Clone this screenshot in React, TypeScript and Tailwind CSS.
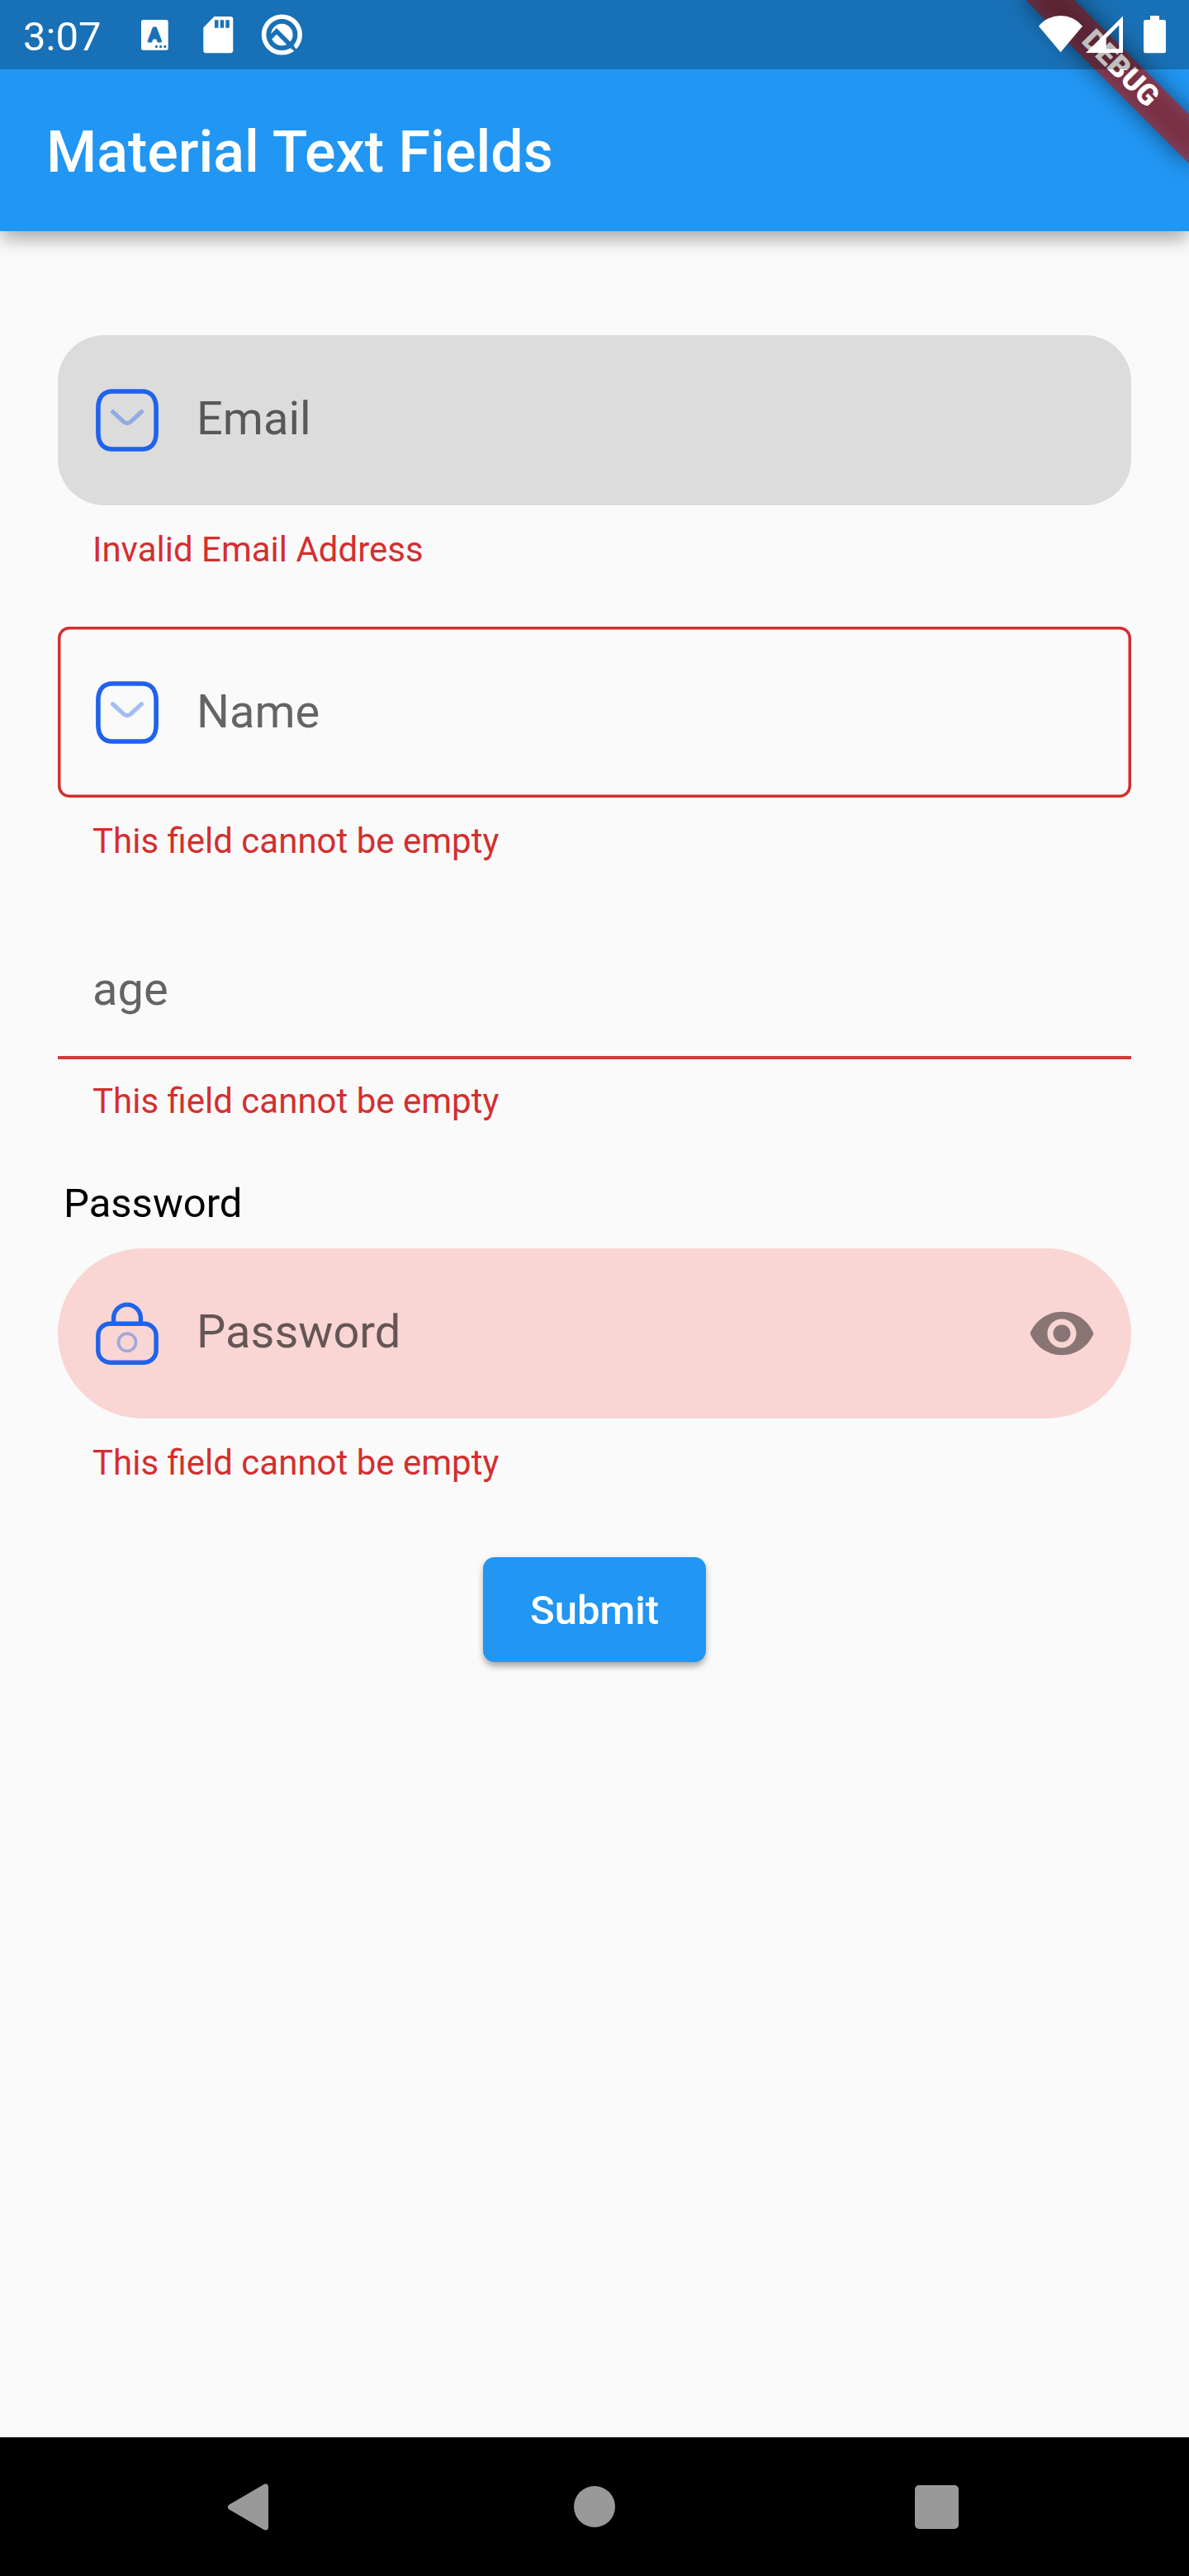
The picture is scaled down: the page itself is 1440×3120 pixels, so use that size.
import React from "react";

function MailIcon() {
  return (
    <svg className="size-[84px] shrink-0" viewBox="-4 -4 84 84" fill="none" stroke="#2062EC" strokeWidth="5.6">
      <path d="M20 3H56C66 3 73.1 9.5 73.1 23V53C73.1 66.500 66 73 56 73H20C10 73 2.900 66.500 2.900 53V23C2.900 9.500 10 3 20 3Z" />
      <path opacity="0.4" strokeLinecap="round" strokeLinejoin="round" strokeWidth="5.2" d="M20.500 27.700L33 39.200C36 42.300 40 42.300 43 39.200L55.500 27.700" />
    </svg>
  );
}

function LockIcon() {
  return (
    <svg className="size-[84px] shrink-0" viewBox="-4 -4 84 84" fill="none" stroke="#2062EC" strokeWidth="5.4">
      <path d="M21.6 26V19.5a16.4 16.4 0 0 1 32.8 0V26" />
      <rect x="2.8" y="26.2" width="70.3" height="47" rx="14.5" />
      <circle cx="38" cy="48.7" r="10.6" opacity="0.4" strokeWidth="3.6" />
    </svg>
  );
}

function EyeIcon() {
  return (
    <svg className="size-[84px] shrink-0" viewBox="0 0 24 24" fill="#000" fillOpacity="0.45">
      <path d="M12 4.5C7 4.5 2.73 7.61 1 12c1.73 4.39 6 7.5 11 7.5s9.27-3.11 11-7.5c-1.73-4.39-6-7.5-11-7.5zM12 17c-2.76 0-5-2.24-5-5s2.24-5 5-5 5 2.24 5 5-2.24 5-5 5zm0-8c-1.66 0-3 1.34-3 3s1.34 3 3 3 3-1.34 3-3-1.34-3-3-3z" />
    </svg>
  );
}

function StatusBar() {
  return (
    <div className="absolute inset-x-0 top-0 flex h-[84px] items-center bg-black/25 px-[28px] text-white">
      <span className="w-[143px] pt-[5px] text-[49px] leading-[84px]">3:07</span>
      <svg className="h-[84px] w-[33px]" viewBox="171 0 33 84">
        <rect x="171" y="24" width="32.7" height="36.7" rx="2.5" fill="#fff" />
        <text x="187.3" y="49.6" textAnchor="middle" fontFamily="Roboto" fontWeight="500" fontSize="22.5" fill="#1971B6" stroke="#1971B6" strokeWidth="2.8" strokeLinejoin="round">A</text>
        <g fill="#1971B6">
          <circle cx="189.4" cy="56.4" r="1.6" />
          <circle cx="194.6" cy="56.4" r="1.6" />
          <circle cx="199.8" cy="56.4" r="1.6" />
        </g>
      </svg>
      <svg className="ml-[42px] h-[84px] w-[37px]" viewBox="246 0 37 84">
        <path fill="#fff" d="M259.5 20H279a3.3 3.3 0 0 1 3.3 3.3V61a3.3 3.3 0 0 1-3.3 3.3H249.6a3.3 3.3 0 0 1-3.3-3.3V33.4Z" />
        <path fill="#1971B6" d="M260 24.3h4.5v9.4H260ZM266.7 24.3h4.5v9.4h-4.5ZM273.3 24.3h4.5v9.4h-4.5Z" />
      </svg>
      <svg className="ml-[33px] h-[84px] w-[51px]" viewBox="316 0 51 84" fill="none">
        <circle cx="341.4" cy="42" r="21.8" stroke="#fff" strokeWidth="5.6" />
        <circle cx="341.4" cy="42" r="13.2" fill="#fff" />
        <path stroke="#1971B6" strokeWidth="5.4" d="M325.5 47.3L335 37.8L355 57.8" />
        <path stroke="#1971B6" strokeWidth="3.8" d="M352 55L364 67" />
      </svg>
      <svg className="ml-auto h-[84px] w-[53px]" viewBox="1258 0 53 84">
        <path fill="#fff" d="M1258 31.7A34 34 0 0 1 1311 31.7L1284.5 63.3Z" />
      </svg>
      <svg className="ml-[4px] h-[84px] w-[45px]" viewBox="1315 0 45 84">
        <path fill="#fff" fillRule="evenodd" d="M1315 64L1360 19.5V64ZM1339.7 46.3V59.3H1355.3V30.5Z" />
      </svg>
      <svg className="ml-[25px] h-[84px] w-[27px]" viewBox="1385 0 27 84">
        <path fill="#fff" d="M1393 19h11v5h5.5a2.5 2.5 0 0 1 2.5 2.5V61.8a2.5 2.5 0 0 1-2.5 2.5H1387.5a2.5 2.5 0 0 1-2.5-2.5V26.5a2.5 2.5 0 0 1 2.5-2.5H1393Z" />
      </svg>
    </div>
  );
}

function DebugBanner() {
  return (
    <div className="absolute top-[98px] -right-[140px] h-[42px] w-[280px] origin-[140px_-98px] rotate-45">
      <div className="absolute inset-0 bg-black/50 blur-[14px]" />
      <div className="absolute inset-0 flex items-center justify-center bg-[#B71C1C]/63 pb-[3px] text-[35.7px] leading-[39px] font-black text-white">
        DEBUG
      </div>
    </div>
  );
}

function ErrorText({ children }: { children: React.ReactNode }) {
  return <p className="pl-[42px] text-[42px] leading-[49px] text-[#D32F2F]">{children}</p>;
}

export default function App() {
  return (
    <div className="relative flex h-[3120px] w-[1440px] flex-col overflow-hidden bg-[#FAFAFA] font-['Roboto',sans-serif]">
      <header className="flex h-[280px] shrink-0 items-center bg-[#2196F3] pt-[88px] pl-[56px] shadow-[0_12px_20px_-2px_rgba(0,0,0,0.31)]">
        <h1 className="text-[70px] leading-[82px] font-medium text-white">Material Text Fields</h1>
      </header>

      <main className="flex flex-1 flex-col px-[70px] pt-[126px]">
        <div className="mb-[29px] flex h-[206px] items-center gap-[42px] rounded-[56px] bg-[#DCDCDC] px-[42px]">
          <MailIcon />
          <span className="pb-[5px] text-[56px] leading-[66px] text-black/60">Email</span>
        </div>
        <ErrorText>Invalid Email Address</ErrorText>

        <div className="mt-[69px] mb-[28px] flex h-[207px] items-center gap-[42px] rounded-[14px] px-[42px] shadow-[inset_0_0_0_3.5px_#D32F2F]">
          <MailIcon />
          <span className="pb-[2px] text-[56px] leading-[66px] text-black/60">Name</span>
        </div>
        <ErrorText>This field cannot be empty</ErrorText>

        <div className="mt-[70px] mb-[26px] flex h-[170px] items-center border-b-4 border-[#D5393A] px-[42px] pt-[4px]">
          <span className="text-[56px] leading-[66px] text-black/60">age</span>
        </div>
        <ErrorText>This field cannot be empty</ErrorText>

        <label className="mt-[71px] pl-[7px] text-[49px] leading-[57px] text-black">Password</label>
        <div className="mt-[26px] mb-[29px] flex h-[206px] items-center gap-[42px] rounded-full bg-[#F9D6D4] px-[42px]">
          <LockIcon />
          <span className="flex-1 pb-[5px] text-[56px] leading-[66px] text-black/60">Password</span>
          <EyeIcon />
        </div>
        <ErrorText>This field cannot be empty</ErrorText>

        <button className="mt-[90px] h-[127px] w-[270px] self-center rounded-[14px] bg-[#2196F3] pt-[2px] text-[49px] leading-[57px] font-medium text-white shadow-[0_7px_8px_-2px_rgba(0,0,0,0.26),0_3px_10px_rgba(0,0,0,0.14)]">
          Submit
        </button>
      </main>

      <nav className="flex h-[168px] shrink-0 items-center bg-black pl-[276px]">
        <svg className="h-[57px] w-[50px]" viewBox="0 0 50 57">
          <path fill="#999" stroke="#999" strokeWidth="7" strokeLinejoin="round" d="M3.5 28.5L45.5 4V53Z" />
        </svg>
        <div className="ml-[369px] size-[50px] rounded-full bg-[#999]" />
        <div className="ml-[363px] size-[53px] rounded-[5px] bg-[#999]" />
      </nav>

      <DebugBanner />
      <StatusBar />
    </div>
  );
}
